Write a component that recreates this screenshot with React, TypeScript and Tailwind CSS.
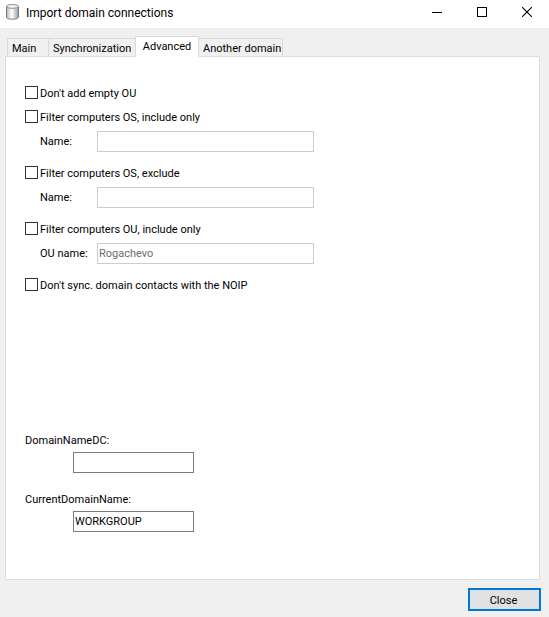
import { useState } from "react";

const tabs = [
  { name: "Main", className: "w-[42px]" },
  { name: "Synchronization", className: "w-[88px]" },
  { name: "Advanced", className: "w-16" },
  { name: "Another domain", className: "w-[85px]" },
];

const filters = [
  { id: "os-include", label: "Filter computers OS, include only", field: "Name:", value: "" },
  { id: "os-exclude", label: "Filter computers OS, exclude", field: "Name:", value: "" },
  { id: "ou-include", label: "Filter computers OU, include only", field: "OU name:", value: "Rogachevo" },
];

const domains = [
  { id: "domain-dc", label: "DomainNameDC:", value: "" },
  { id: "current-domain", label: "CurrentDomainName:", value: "WORKGROUP" },
];

function Check({ id, label }: { id: string; label: string }) {
  return (
    <div className="flex items-center gap-0.5 h-[15px]">
      <input
        id={id}
        type="checkbox"
        className="appearance-none size-[13px] shrink-0 border border-[#333333] bg-white checked:bg-[#333333]"
      />
      <label htmlFor={id} className="pt-0.5">
        {label}
      </label>
    </div>
  );
}

function TitleBar() {
  return (
    <header className="flex items-center h-7 bg-white pl-1 pb-1">
      <svg width="16" height="18" viewBox="0 0 16 18" className="shrink-0" aria-hidden="true">
        <defs>
          <linearGradient id="metal" x1="0" x2="1" y1="0" y2="0">
            <stop offset="0" stopColor="#b0b0b0" />
            <stop offset="0.25" stopColor="#e4e4e4" />
            <stop offset="0.45" stopColor="#ffffff" />
            <stop offset="0.75" stopColor="#c8c8c8" />
            <stop offset="1" stopColor="#9a9a9a" />
          </linearGradient>
        </defs>
        <path
          d="M2.5 3.4v10.6c0 1.4 2.5 2.2 6 2.2s6-.8 6-2.2V3.4z"
          fill="url(#metal)"
          stroke="#777777"
        />
        <ellipse cx="8.5" cy="3.4" rx="6" ry="1.9" fill="#f1f1f1" stroke="#8c8c8c" />
      </svg>
      <h1 className="flex-1 pl-1.5 pt-0.5 text-[12px] leading-4 font-[Roboto,sans-serif] whitespace-nowrap">
        Import domain connections
      </h1>
      <button type="button" aria-label="Minimize" className="flex items-center justify-center w-[45px] h-6">
        <svg width="10" height="10" shapeRendering="crispEdges">
          <path d="M0 5.5h10" stroke="black" />
        </svg>
      </button>
      <button type="button" aria-label="Maximize" className="flex items-center justify-center w-[45px] h-6">
        <svg width="10" height="10" shapeRendering="crispEdges">
          <path d="M.5 .5h9v9h-9z" fill="none" stroke="black" />
        </svg>
      </button>
      <button type="button" aria-label="Close window" className="flex items-center justify-center w-[45px] h-6">
        <svg width="10" height="10">
          <path d="M0 0l10 10M10 0L0 10" stroke="black" strokeWidth="1.1" />
        </svg>
      </button>
    </header>
  );
}

export default function App() {
  const [active, setActive] = useState("Advanced");

  return (
    <div className="flex flex-col min-h-screen bg-[#f0f0f0] text-black text-[11px] leading-[15px] font-[Roboto,sans-serif]">
      <TitleBar />

      <main className="flex flex-col flex-1 pt-2 pl-[5px] pr-[9px]">
        <div role="tablist" className="flex items-end px-0.5 -mb-px">
          {tabs.map((tab) => (
            <button
              key={tab.name}
              type="button"
              role="tab"
              aria-selected={active === tab.name}
              onClick={() => setActive(tab.name)}
              className={`${tab.className} -mr-px shrink-0 border border-[#d9d9d9] whitespace-nowrap ${
                active === tab.name
                  ? "relative h-[21px] bg-white border-b-white text-center"
                  : "h-[19px] px-1 pt-0.5 text-left"
              }`}
            >
              {tab.name}
            </button>
          ))}
        </div>

        <section className="flex-1 border border-[#dcdcdc] bg-white pt-7 pl-[19px] pr-5 pb-11">
          <div className="flex flex-col gap-[13px]">
            <div className="-mb-1">
              <Check id="empty-ou" label="Don't add empty OU" />
            </div>
            {filters.map((f) => (
              <div key={f.id} className="flex flex-col gap-[7px]">
                <Check id={f.id} label={f.label} />
                <div className="flex items-center pl-[15px]">
                  <label htmlFor={`${f.id}-name`} className="w-[57px] whitespace-nowrap">
                    {f.field}
                  </label>
                  <input
                    id={`${f.id}-name`}
                    type="text"
                    disabled
                    defaultValue={f.value}
                    className="w-[217px] h-[21px] px-px border border-[#cccccc] bg-white text-[#6d6d6d]"
                  />
                </div>
              </div>
            ))}
            <Check id="no-sync" label="Don't sync. domain contacts with the NOIP" />
          </div>

          <div className="flex flex-col gap-[19px] mt-[141px]">
            {domains.map((d) => (
              <div key={d.id} className="flex flex-col gap-1">
                <label htmlFor={d.id}>{d.label}</label>
                <input
                  id={d.id}
                  type="text"
                  defaultValue={d.value}
                  className="w-[121px] h-[21px] ml-12 px-px border border-[#7a7a7a] bg-white"
                />
              </div>
            ))}
          </div>
        </section>
      </main>

      <footer className="flex justify-end pt-2 pr-2 pb-1.5">
        <button type="button" className="w-[73px] h-[23px] border-2 border-[#0078d7] bg-[#e1e1e1] pt-px pr-0.5">
          Close
        </button>
      </footer>
    </div>
  );
}
